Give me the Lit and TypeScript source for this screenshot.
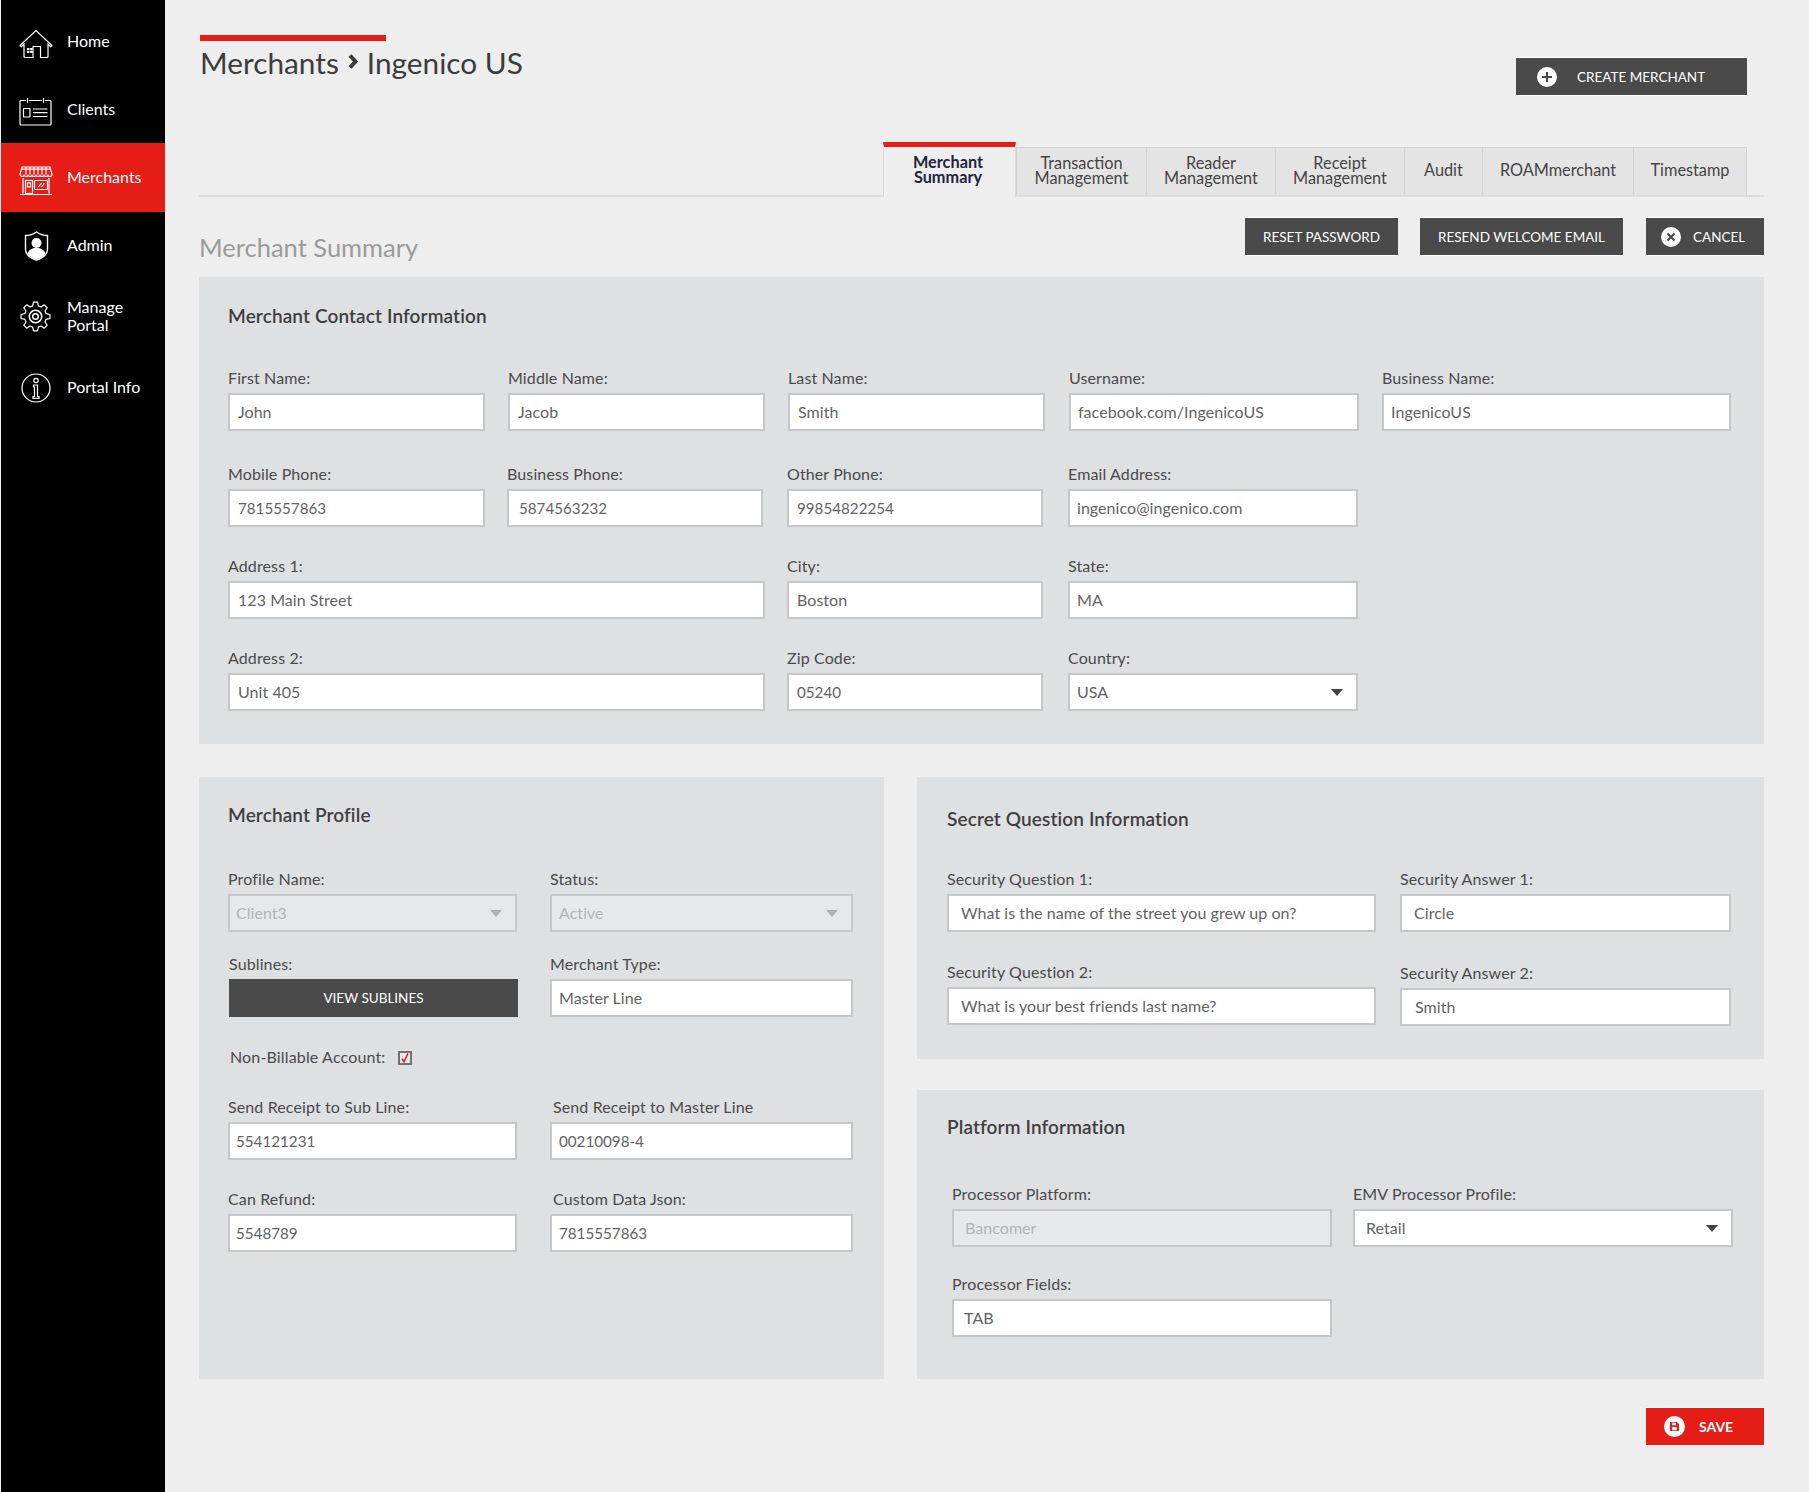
import { LitElement, html, css, svg } from "lit";
import { customElement } from "lit/decorators.js";

type F = { l: string; v?: string; w: number; g?: number; t?: number; p?: number; lx?: number; kind?: string };

const contact: { cls: string; fields: F[] }[] = [
  { cls: "c1", fields: [
    { l: "First Name:", v: "John", w: 257 },
    { l: "Middle Name:", v: "Jacob", w: 257, g: 23 },
    { l: "Last Name:", v: "Smith", w: 257, g: 23 },
    { l: "Username:", v: "facebook.com/IngenicoUS", w: 290, g: 24, p: 7 },
    { l: "Business Name:", v: "IngenicoUS", w: 349, g: 23, p: 7 },
  ]},
  { cls: "c2", fields: [
    { l: "Mobile Phone:", v: "7815557863", w: 257 },
    { l: "Business Phone:", v: "5874563232", w: 256, g: 22, p: 10 },
    { l: "Other Phone:", v: "99854822254", w: 256, g: 24 },
    { l: "Email Address:", v: "ingenico@ingenico.com", w: 290, g: 25, p: 7 },
  ]},
  { cls: "c3", fields: [
    { l: "Address 1:", v: "123 Main Street", w: 537 },
    { l: "City:", v: "Boston", w: 256, g: 22 },
    { l: "State:", v: "MA", w: 290, g: 25, p: 7 },
  ]},
  { cls: "c4", fields: [
    { l: "Address 2:", v: "Unit 405", w: 537 },
    { l: "Zip Code:", v: "05240", w: 256, g: 22 },
    { l: "Country:", v: "USA", w: 290, g: 25, p: 7, kind: "sel" },
  ]},
];

const profile1: F[] = [
  { l: "Profile Name:", v: "Client3", w: 289, p: 6, kind: "dis sel" },
  { l: "Status:", v: "Active", w: 303, g: 33, p: 7, kind: "dis sel" },
];
const profile3: F[] = [
  { l: "Send Receipt to Sub Line:", v: "554121231", w: 289, p: 6 },
  { l: "Send Receipt to Master Line", v: "00210098-4", w: 303, g: 33, p: 7, lx: 3 },
];
const profile4: F[] = [
  { l: "Can Refund:", v: "5548789", w: 289, p: 6 },
  { l: "Custom Data Json:", v: "7815557863", w: 303, g: 33, p: 7, lx: 3 },
];
const secret1: F[] = [
  { l: "Security Question 1:", v: "What is the name of the street you grew up on?", w: 429, p: 12 },
  { l: "Security Answer 1:", v: "Circle", w: 331, g: 24, p: 12 },
];
const secret2: F[] = [
  { l: "Security Question 2:", v: "What is your best friends last name?", w: 429, p: 12 },
  { l: "Security Answer 2:", v: "Smith", w: 331, g: 24, t: 1, p: 13 },
];
const platform1: F[] = [
  { l: "Processor Platform:", v: "Bancomer", w: 380, p: 11, kind: "dis" },
  { l: "EMV Processor Profile:", v: "Retail", w: 380, g: 21, p: 11, kind: "sel" },
];
const platform2: F[] = [{ l: "Processor Fields:", v: "TAB", w: 380, p: 10 }];

const tabs = [
  { t: ["Transaction", "Management"], w: 130 },
  { t: ["Reader", "Management"], w: 129 },
  { t: ["Receipt", "Management"], w: 129 },
  { t: ["Audit"], w: 78 },
  { t: ["ROAMmerchant"], w: 151 },
  { t: ["Timestamp"], w: 114 },
];

function gearPath(cx: number, cy: number, ro: number, ri: number, n: number) {
  const pts: string[] = [];
  for (let i = 0; i < n; i++) {
    const a = (i * 360) / n - 90;
    for (const [d, r] of [[-15, ri], [-8, ro], [8, ro], [15, ri]] as [number, number][]) {
      const rad = ((a + d) * Math.PI) / 180;
      pts.push(`${(cx + r * Math.cos(rad)).toFixed(2)} ${(cy + r * Math.sin(rad)).toFixed(2)}`);
    }
  }
  return "M" + pts.join("L") + "Z";
}

const icons: Record<string, unknown> = {
  home: svg`<path d="M1 16.500 17 1.500l16 15-1.300 1.200-2.700-2.500V27.500a1 1 0 0 1-1 1h-6.500V17.500h-7.500v11H6a1 1 0 0 1-1-1V15.200l-2.700 2.500Z"/><rect x="8" y="19" width="5.500" height="5" fill="#fff" stroke="none"/><path d="M10.700 19v5M8 21.500h5.500" stroke="#000" stroke-width=".7"/>`,
  clients: svg`<path d="M7 3.500H2a1 1 0 0 0-1 1V27a1 1 0 0 0 1 1h29a1 1 0 0 0 1-1V4.500a1 1 0 0 0-1-1h-5M10 3.500h13M8.500 1v5M24.500 1v5"/><rect x="4.500" y="11.500" width="6.500" height="8.500" rx=".5"/><path d="M14 12h14.500M14 15.700h14.500M14 19.500h14.500"/>`,
  merchants: svg`<path d="M3 1h28l2 7.500a2 2 0 0 1-4 0 2 2 0 0 1-4 0 2 2 0 0 1-4 0 2 2 0 0 1-4 0 2 2 0 0 1-4 0 2 2 0 0 1-4 0 2 2 0 0 1-4 0 2 2 0 0 1-4 0Z"/><path d="M7 1v7.500M11 1v7.500M15 1v7.500M19 1v7.500M23 1v7.500M27 1v7.500M2 3.200h30"/><path d="M4 12v15.500M30 12v15.500M1 28.500h32"/><rect x="6.500" y="14.500" width="7" height="13"/><rect x="8.500" y="17" width="3" height="4"/><rect x="15.500" y="14.500" width="13" height="9" rx=".8"/><path d="M19.500 21l3-4M22.500 21l3-4"/>`,
  admin: svg`<path d="M12.500 1 C 9 3.500 5 4.500 1.500 4.500 V 18 C 1.500 23 6 27 12.500 29 19 27 23.500 23 23.500 18 V 4.500 C 20 4.500 16 3.500 12.500 1Z" stroke-width="1.4"/><circle cx="12.500" cy="12" r="5" fill="#fff" stroke="none"/><path d="M3.500 22.500c1-3.500 4.500-5.500 9-5.500s8 2 9 5.500C19.500 25.500 16 27.500 12.500 28.500 9 27.500 5.500 25.500 3.500 22.500Z" fill="#fff" stroke="none"/>`,
  gear: svg`<path d="${gearPath(15.5, 15.5, 14.6, 11, 8)}" stroke-linejoin="round"/><circle cx="15.500" cy="15.500" r="6.200" stroke-width="1.500"/><circle cx="15.500" cy="15.500" r="2.800" stroke-width="1.500"/>`,
  info: svg`<circle cx="15" cy="15" r="14"/><circle cx="15" cy="7.500" r="2.200"/><path d="M12.500 12h4v11.500h1.500v1.800h-6v-1.800h1.500v-9.700h-1Z"/>`,
};

@customElement("app-root")
export class AppRoot extends LitElement {
  static styles = css`
    :host { display: flex; min-height: 1492px; background: #eeeeee; font-family: Lato, "Open Sans", sans-serif; color: #4a4a4a; }
    .side { width: 164px; margin-left: 1px; background: #000; padding-top: 8px; flex: none; box-sizing: border-box; }
    .nav { display: flex; align-items: center; color: #fff; font-size: 16px; line-height: 18px; position: relative; padding: 0 0 2px 66px; box-sizing: border-box; }
    .nav.on { background: #e61c17; }
    .nav .ic { position: absolute; fill: none; stroke: #fff; stroke-width: 1.2; }
    .home .ic { left: 18px; top: 21px; width: 34px; height: 30px; }
    .clients .ic { left: 18px; top: 21px; width: 33px; height: 29px; }
    .merchants .ic { left: 18px; top: 23px; width: 34px; height: 30px; }
    .admin .ic { left: 23px; top: 19px; width: 25px; height: 30px; }
    .gear .ic { left: 19px; top: 21px; width: 31px; height: 31px; }
    .info .ic { left: 20px; top: 19px; width: 30px; height: 30px; }

    .main { width: 1565px; margin-left: 34px; padding-top: 35px; box-sizing: border-box; flex: none; }
    .top { display: flex; justify-content: space-between; align-items: flex-start; height: 107px; }
    .bar { width: 186px; height: 6px; background: #e61c17; margin-left: 1px; }
    .crumb { display: flex; align-items: center; font-size: 29.8px; line-height: 36px; margin: 4px 0 0 1px; color: #3c3c3c; }
    .crumb svg { width: 12px; height: 17px; margin: -4px 8px 0 8px; fill: none; stroke: #3c3c3c; stroke-width: 4; }

    .btn { display: flex; align-items: center; justify-content: center; height: 39px; box-sizing: border-box; background: #4a4a4a; color: #fff; font-size: 13.5px; border: 1px solid #fff; border-left: 0; border-right: 0; white-space: nowrap; }
    .btn .dot { width: 20px; height: 20px; border-radius: 50%; background: #fff; flex: none; display: flex; align-items: center; justify-content: center; }
    .btn .dot svg { width: 12px; height: 12px; fill: none; stroke: #4a4a4a; stroke-width: 2.2; }
    .create { width: 231px; margin: 22px 17px 0 0; justify-content: flex-start; padding-left: 21px; gap: 20px; }
    .reset { width: 153px; }
    .resend { width: 203px; }
    .cancel { width: 118px; justify-content: flex-start; padding-left: 15px; gap: 12px; }

    .tabs { display: flex; justify-content: flex-end; align-items: flex-end; height: 53px; padding-right: 17px; border-bottom: 2px solid #dcdcdc; }
    .tab { box-sizing: border-box; height: 48px; background: #e4e4e5; border: 1px solid #d3d3d3; border-right: 0; border-bottom: 0; display: flex; flex-direction: column; align-items: center; justify-content: center; font-size: 16.3px; line-height: 14.7px; color: #444; padding-bottom: 2px; }
    .tab.last { border-right: 1px solid #d3d3d3; }
    .tab.act { width: 133px; height: 55px; margin-bottom: -2px; background: #eeeeee; border: 1px solid #d8d8d8; border-top: 5px solid #e61c17; border-bottom: 0; color: #23263a; font-weight: 700; padding: 0 3px 4px 0; }
    .subhead { display: flex; height: 80px; padding-top: 20px; box-sizing: border-box; gap: 22px; }
    .subhead h2 { margin: 14px auto 0 0; font-weight: 400; font-size: 25.5px; line-height: 32px; color: #9a9a9a; }
    .subhead .cancel { margin-left: 1px; }

    .panel { background: #dfe0e2; box-sizing: border-box; }
    h3 { margin: 0; font-size: 19px; line-height: 22px; font-weight: 600; letter-spacing: .12px; color: #3f3f3f; }
    .row { display: flex; align-items: flex-start; }
    .field { flex: none; }
    .label { font-size: 16px; letter-spacing: .12px; line-height: 18px; height: 18px; margin-bottom: 6px; white-space: nowrap; }
    .box { height: 38px; box-sizing: border-box; background: #fff; border: 2px solid #c6c7c9; font-size: 16px; letter-spacing: .05px; line-height: 34px; color: #636363; position: relative; white-space: nowrap; }
    .box.num { font-size: 15.2px; letter-spacing: 0; }
    .box.dis { background: #e7e8ea; color: #b4b5b7; }
    .box.sel::after { content: ""; position: absolute; right: 13px; top: 14px; border: 6px solid transparent; border-top: 7px solid #444; border-bottom: 0; }
    .box.dis.sel::after { border-top-color: #aeafb1; }

    .contact { padding: 28px 0 32px 29px; height: 467px; }
    .contact h3 { margin-bottom: 42px; }
    .c2 { margin-top: 34px; }
    .c3 { margin-top: 30px; }
    .c4 { margin-top: 30px; }

    .cols { display: flex; gap: 33px; margin-top: 33px; }
    .profile { width: 685px; padding: 27px 0 127px 30px; }
    .profile h3 { margin-bottom: 44px; margin-left: -1px; }
    .profile .row { margin-left: -1px; }
    .r2 { margin-top: 23px; }
    .view { width: 289px; height: 38px; margin-left: 1px; background: #4a4a4a; color: #fff; font-size: 13.5px; display: flex; align-items: center; justify-content: center; box-sizing: border-box; }
    .view-wrap { width: 289px; flex: none; }
    .view-wrap .label { margin-left: 1px; }
    .bill { display: flex; align-items: center; gap: 13px; margin: 31px 0 0 1px; font-size: 16px; letter-spacing: .15px; line-height: 18px; height: 18px; }
    .bill svg { width: 14px; height: 14px; flex: none; margin-top: 2px; }
    .r3 { margin-top: 32px; }
    .r4 { margin-top: 30px; }

    .right { width: 847px; display: flex; flex-direction: column; gap: 31px; }
    .secret { padding: 31px 0 32px 30px; height: 282px; }
    .secret h3 { margin-bottom: 40px; }
    .s2 { margin-top: 31px; }
    .plat { flex: 1; padding: 26px 0 0 30px; }
    .plat h3 { margin-bottom: 47px; }
    .plat .row { margin-left: 5px; }
    .p2 { margin-top: 28px; }

    .foot { display: flex; justify-content: flex-end; margin-top: 28px; }
    .save { width: 118px; background: #e61c17; justify-content: flex-start; padding-left: 18px; gap: 14px; font-weight: 700; font-size: 14px; }
    .save .dot { width: 21px; height: 21px; }
    .save .dot svg { stroke: none; fill: #e61c17; width: 11px; height: 11px; }
  `;

  private field(f: F) {
    const num = /^[\d-]+$/.test(f.v ?? "");
    return html`<div class="field" style="width:${f.w}px;margin-left:${f.g ?? 0}px;margin-top:${f.t ?? 0}px">
      <div class="label" style="padding-left:${f.lx ?? 0}px">${f.l}</div>
      <div class="box ${f.kind ?? ""} ${num ? "num" : ""}" style="padding-left:${f.p ?? 8}px">${f.v}</div>
    </div>`;
  }

  private nav(key: string, cls: string, h: number, label: unknown, vb: string, on = false) {
    return html`<div class="nav ${cls} ${on ? "on" : ""}" style="height:${h}px">
      <svg class="ic" viewBox="${vb}">${icons[key]}</svg><span>${label}</span>
    </div>`;
  }

  render() {
    return html`
      <nav class="side">
        ${this.nav("home", "home", 68, "Home", "0 0 34 30")}
        ${this.nav("clients", "clients", 67, "Clients", "0 0 33 29")}
        ${this.nav("merchants", "merchants", 69, "Merchants", "0 0 34 30", true)}
        ${this.nav("admin", "admin", 68, "Admin", "0 0 25 30")}
        ${this.nav("gear", "gear", 74, html`Manage<br />Portal`, "0 0 31 31")}
        ${this.nav("info", "info", 68, "Portal Info", "0 0 30 30")}
      </nav>
      <main class="main">
        <div class="top">
          <div>
            <div class="bar"></div>
            <div class="crumb">
              <span>Merchants</span>
              <svg viewBox="0 0 12 17"><path d="M3 2.500l5.500 6-5.500 6" /></svg>
              <span>Ingenico US</span>
            </div>
          </div>
          <div class="btn create">
            <span class="dot"><svg viewBox="0 0 12 12"><path d="M6 1v10M1 6h10" /></svg></span>CREATE MERCHANT
          </div>
        </div>
        <div class="tabs">
          <div class="tab act"><span>Merchant</span><span>Summary</span></div>
          ${tabs.map(
            (t, i) => html`<div class="tab ${i === tabs.length - 1 ? "last" : ""}" style="width:${t.w}px">
              ${t.t.map((s) => html`<span>${s}</span>`)}
            </div>`
          )}
        </div>
        <div class="subhead">
          <h2>Merchant Summary</h2>
          <div class="btn reset">RESET PASSWORD</div>
          <div class="btn resend">RESEND WELCOME EMAIL</div>
          <div class="btn cancel">
            <span class="dot"><svg viewBox="0 0 12 12"><path d="M2.500 2.500l7 7M9.500 2.500l-7 7" /></svg></span>CANCEL
          </div>
        </div>
        <section class="panel contact">
          <h3>Merchant Contact Information</h3>
          ${contact.map((r) => html`<div class="row ${r.cls}">${r.fields.map((f) => this.field(f))}</div>`)}
        </section>
        <div class="cols">
          <section class="panel profile">
            <h3>Merchant Profile</h3>
            <div class="row">${profile1.map((f) => this.field(f))}</div>
            <div class="row r2">
              <div class="view-wrap">
                <div class="label">Sublines:</div>
                <div class="view">VIEW SUBLINES</div>
              </div>
              ${this.field({ l: "Merchant Type:", v: "Master Line", w: 303, g: 33, p: 7 })}
            </div>
            <div class="bill">
              <span>Non-Billable Account:</span>
              <svg viewBox="0 0 14 14">
                <rect x="1" y="1" width="12" height="12" fill="#e7e8ea" stroke="#666" stroke-width="1.8" />
                <path d="M4 7.500l2 3.500 4-8.500" fill="none" stroke="#ee1111" stroke-width="1.400" />
              </svg>
            </div>
            <div class="row r3">${profile3.map((f) => this.field(f))}</div>
            <div class="row r4">${profile4.map((f) => this.field(f))}</div>
          </section>
          <div class="right">
            <section class="panel secret">
              <h3>Secret Question Information</h3>
              <div class="row">${secret1.map((f) => this.field(f))}</div>
              <div class="row s2">${secret2.map((f) => this.field(f))}</div>
            </section>
            <section class="panel plat">
              <h3>Platform Information</h3>
              <div class="row">${platform1.map((f) => this.field(f))}</div>
              <div class="row p2">${platform2.map((f) => this.field(f))}</div>
            </section>
          </div>
        </div>
        <div class="foot">
          <div class="btn save">
            <span class="dot"><svg viewBox="0 0 12 12"><path fill-rule="evenodd" d="M1 1h7.500L11 3.500V11H1ZM3.500 2v2.500h4V2ZM3.500 6.500V10h5V6.500Z" /></svg></span>SAVE
          </div>
        </div>
      </main>
    `;
  }
}
